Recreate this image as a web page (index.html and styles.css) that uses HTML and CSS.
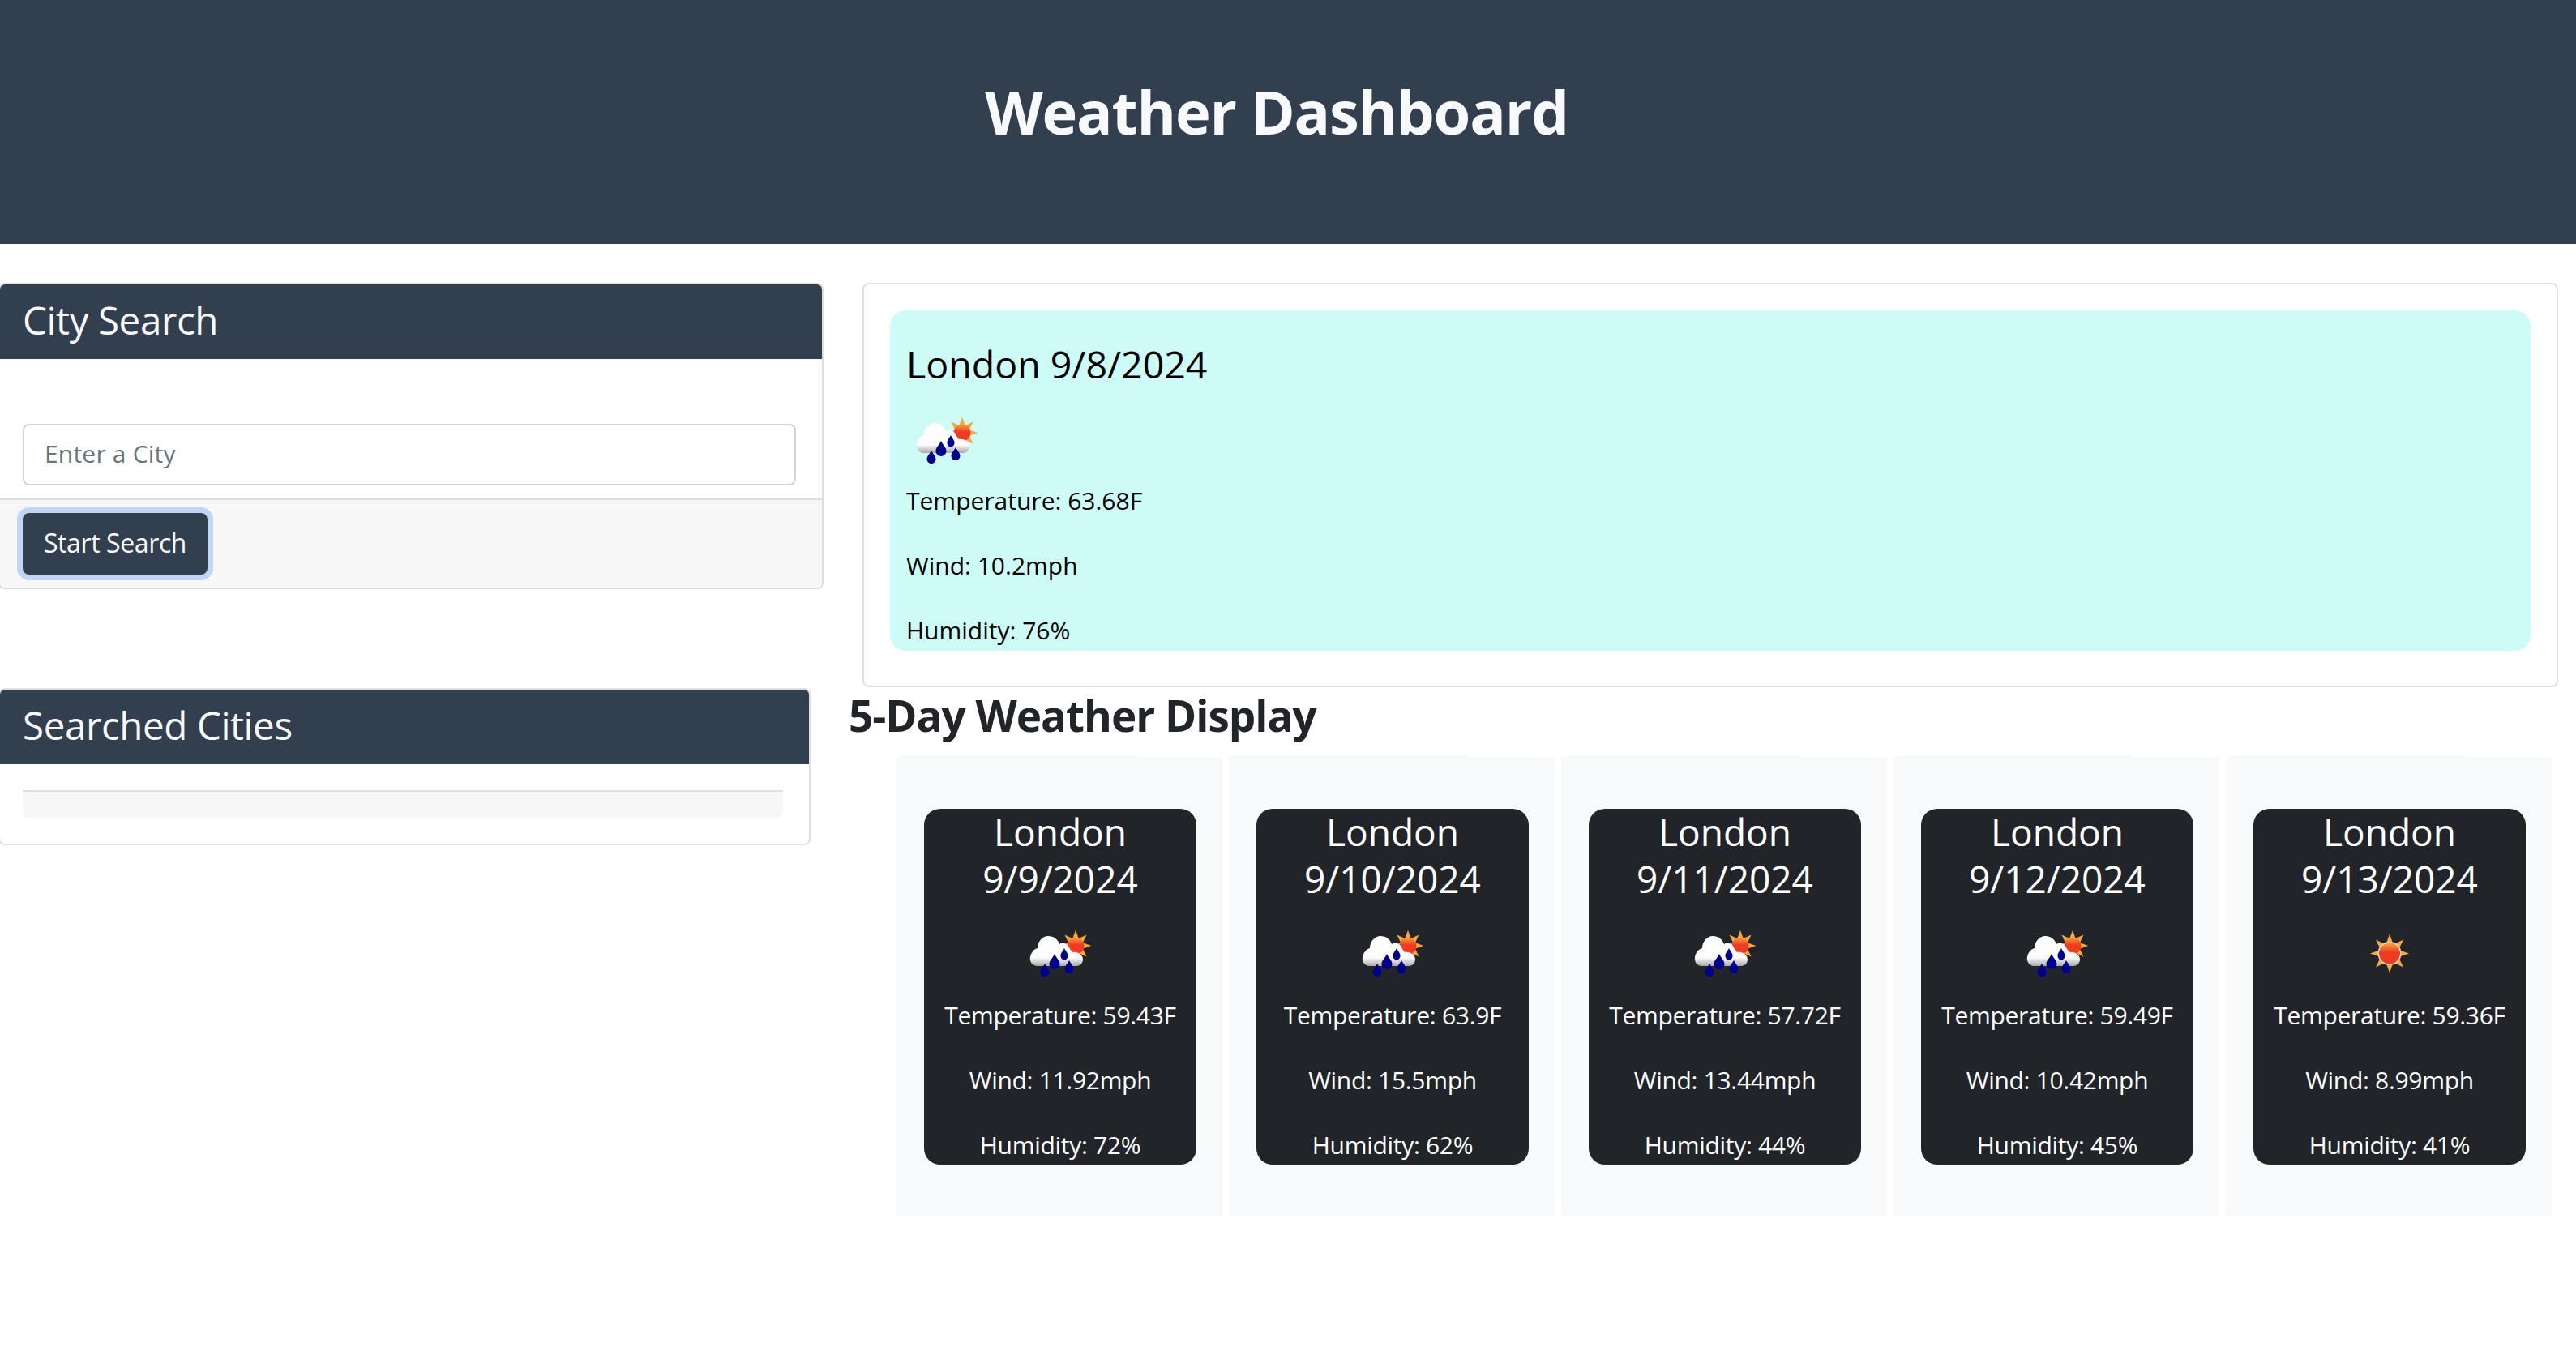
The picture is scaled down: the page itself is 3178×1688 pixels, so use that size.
FILE: index.html
```html
<!DOCTYPE html>
<html lang="en">
<head>
<meta charset="utf-8">
<title>Weather Dashboard</title>
<link rel="stylesheet" href="styles.css">
</head>
<body>
<svg class="sprite" width="0" height="0" aria-hidden="true">
  <defs>
    <linearGradient id="cloudFill" x1="0" y1="0" x2="0" y2="1">
      <stop offset="0" stop-color="#ffffff"/><stop offset="0.72" stop-color="#fbfbfb"/><stop offset="1" stop-color="#a9a9a9"/>
    </linearGradient>
    <linearGradient id="sunFill" x1="0" y1="0" x2="0" y2="1">
      <stop offset="0" stop-color="#f9a63a"/><stop offset="0.45" stop-color="#ee3a24"/><stop offset="1" stop-color="#ee3a24"/>
    </linearGradient>
    <filter id="soft" x="-10%" y="-10%" width="120%" height="120%"><feGaussianBlur stdDeviation="0.7"/></filter>
    <symbol id="icon-rain" viewBox="0 0 100 100">
      <g filter="url(#soft)">
        <g transform="translate(69 38) scale(.8)">
          <path fill="#f6a73c" d="M0-24 4.6-11.1 17-17 11.1-4.6 24 0 11.1 4.6 17 17 4.6 11.1 0 24-4.6 11.1-17 17-11.1 4.6-24 0-11.1-4.6-17-17-4.6-11.1Z"/>
        </g>
        <circle cx="69" cy="38" r="10.5" fill="url(#sunFill)"/>
        <path fill="url(#cloudFill)" d="M22 63C15 63 12 57 13 52 14 46 18 42 22 41 22 33 28 26 35 26 42 26 47 30 49 36 53 33 60 35 62 42 64 44 64 45 65 46 72 45 78 49 78 55 78 60 74 63 70 63Z"/>
        <path fill="#00008f" d="M31 60C29 64 25.500 67 25.500 70.500 25.500 73.500 28 76 31 76 34 76 36.500 73.500 36.500 70.500 36.500 67 33 64 31 60Z"/>
        <path fill="#00008f" d="M43 48C41 53 36.500 56 36.500 60.500 36.500 64 39.500 67 43 67 46.500 67 49.500 64 49.500 60.500 49.500 56 45 53 43 48Z"/>
        <path fill="#00008f" d="M55 41C53 45 50.500 47 50.500 50.500 50.500 53 52.500 55.500 55 55.500 57.500 55.500 59.500 53 59.500 50.500 59.500 47 57 45 55 41Z"/>
        <path fill="#00008f" d="M61 56C59 60 55.500 63 55.500 66.500 55.500 69.500 58 72 61 72 64 72 66.500 69.500 66.500 66.500 66.500 63 63 60 61 56Z"/>
      </g>
    </symbol>
    <symbol id="icon-sun" viewBox="0 0 100 100">
      <g filter="url(#soft)">
        <g transform="translate(50 47.500)">
          <path fill="#f6a73c" d="M0-24 4.6-11.1 17-17 11.1-4.6 24 0 11.1 4.6 17 17 4.6 11.1 0 24-4.6 11.1-17 17-11.1 4.6-24 0-11.1-4.6-17-17-4.6-11.1Z"/>
        </g>
        <circle cx="50" cy="47.500" r="14.500" fill="#f3dcc8"/>
        <circle cx="50" cy="47.500" r="13" fill="url(#sunFill)"/>
      </g>
    </symbol>
  </defs>
</svg>

<header class="site-header">
  <h1 class="site-title">Weather Dashboard</h1>
</header>

<div class="layout">
  <aside class="sidebar">
    <section class="panel panel-search">
      <h2 class="panel-heading">City Search</h2>
      <div class="panel-body">
        <input class="city-input" type="text" placeholder="Enter a City">
      </div>
      <div class="panel-footer">
        <button class="search-button" type="button">Start Search</button>
      </div>
    </section>

    <section class="panel panel-history">
      <h2 class="panel-heading">Searched Cities</h2>
      <div class="history-body">
        <div class="history-list"></div>
      </div>
    </section>
  </aside>

  <main class="content">
    <section class="current-panel">
      <div class="current-card">
        <h3 class="current-title">London 9/8/2024</h3>
        <svg class="wx-icon current-icon" viewBox="0 0 100 100"><use href="#icon-rain"/></svg>
        <p class="stat">Temperature: 63.68F</p>
        <p class="stat">Wind: 10.2mph</p>
        <p class="stat stat-last">Humidity: 76%</p>
      </div>
    </section>

    <h2 class="forecast-title">5-Day Weather Display</h2>

    <div class="forecast-row">
      <div class="forecast-col">
        <article class="day-card">
          <h3 class="day-title">London<br>9/9/2024</h3>
          <svg class="wx-icon day-icon" viewBox="0 0 100 100"><use href="#icon-rain"/></svg>
          <p class="stat day-stat">Temperature: 59.43F</p>
          <p class="stat day-stat">Wind: 11.92mph</p>
          <p class="stat day-stat stat-last">Humidity: 72%</p>
        </article>
      </div>
      <div class="forecast-col">
        <article class="day-card">
          <h3 class="day-title">London<br>9/10/2024</h3>
          <svg class="wx-icon day-icon" viewBox="0 0 100 100"><use href="#icon-rain"/></svg>
          <p class="stat day-stat">Temperature: 63.9F</p>
          <p class="stat day-stat">Wind: 15.5mph</p>
          <p class="stat day-stat stat-last">Humidity: 62%</p>
        </article>
      </div>
      <div class="forecast-col">
        <article class="day-card">
          <h3 class="day-title">London<br>9/11/2024</h3>
          <svg class="wx-icon day-icon" viewBox="0 0 100 100"><use href="#icon-rain"/></svg>
          <p class="stat day-stat">Temperature: 57.72F</p>
          <p class="stat day-stat">Wind: 13.44mph</p>
          <p class="stat day-stat stat-last">Humidity: 44%</p>
        </article>
      </div>
      <div class="forecast-col">
        <article class="day-card">
          <h3 class="day-title">London<br>9/12/2024</h3>
          <svg class="wx-icon day-icon" viewBox="0 0 100 100"><use href="#icon-rain"/></svg>
          <p class="stat day-stat">Temperature: 59.49F</p>
          <p class="stat day-stat">Wind: 10.42mph</p>
          <p class="stat day-stat stat-last">Humidity: 45%</p>
        </article>
      </div>
      <div class="forecast-col">
        <article class="day-card">
          <h3 class="day-title">London<br>9/13/2024</h3>
          <svg class="wx-icon day-icon" viewBox="0 0 100 100"><use href="#icon-sun"/></svg>
          <p class="stat day-stat">Temperature: 59.36F</p>
          <p class="stat day-stat">Wind: 8.99mph</p>
          <p class="stat day-stat stat-last">Humidity: 41%</p>
        </article>
      </div>
    </div>
  </main>
</div>
</body>
</html>
```

FILE: styles.css
```css
* { box-sizing: border-box; }

html, body { margin: 0; padding: 0; background: #fff; }

body {
  font-family: "Open Sans", "Noto Sans", sans-serif;
  font-size: 30px;
  line-height: 48px;
  color: #212529;
}

.sprite { display: block; width: 0; height: 0; }

.site-header {
  height: 301px;
  background: #323f4f;
  padding: 94px 28px 0 0;
  text-align: center;
}

.site-title {
  margin: 0;
  font-size: 74px;
  line-height: 88px;
  font-weight: 700;
  letter-spacing: -1.2px;
  color: #f8f9fa;
}

.layout { display: flex; align-items: flex-start; }

.sidebar {
  flex: 0 0 1015px;
  padding-top: 48px;
  margin-left: -2px;
}

.panel {
  background: #fff;
  border: 2px solid #dfdfdf;
  border-radius: 8px;
  overflow: hidden;
}

.panel-search { width: 1018px; }

.panel-history { width: 1002px; margin-top: 122px; }

.panel-heading {
  margin: 0;
  height: 92px;
  padding: 15px 28px;
  background: #323f4f;
  color: #f8f9fa;
  font-size: 47.5px;
  line-height: 58px;
  font-weight: 400;
  letter-spacing: -.4px;
}

.panel-body { padding: 80px 32px 16px 28px; }

.city-input {
  display: block;
  width: 954px;
  height: 76px;
  padding: 0 25px 3px;
  border: 2px solid #ced4da;
  border-radius: 8px;
  background: #fff;
  font: inherit;
  font-size: 30px;
  font-weight: 500;
  letter-spacing: .2px;
  color: #495057;
}

.city-input::placeholder { color: #6c757d; opacity: 1; }

.panel-footer {
  padding: 16px 28px;
  background: #f7f7f7;
  border-top: 2px solid #dfdfdf;
}

.search-button {
  display: block;
  height: 76px;
  width: 228px;
  padding: 0 0 3px;
  border: 0;
  border-radius: 8px;
  background: #323f4f;
  box-shadow: 0 0 0 7px #c1d5f5;
  color: #f8f9fa;
  font: inherit;
  font-size: 32px;
  font-weight: 500;
  letter-spacing: -.4px;
}

.history-body { padding: 32px 32px 32px 28px; }

.history-list {
  height: 34px;
  width: 938px;
  background: #f7f7f7;
  border-top: 2px solid #dfdfdf;
  border-radius: 0 0 8px 8px;
}

.content {
  flex: 1;
  min-width: 0;
  padding: 48px 22px 0 31px;
}

.current-panel {
  margin-left: 17px;
  height: 499px;
  padding: 32px 32px 0;
  border: 2px solid #dfdfdf;
  border-radius: 8px;
}

.current-card {
  height: 420px;
  padding: 37px 20px 0;
  background: #ccfcf5;
  border-radius: 20px;
  color: #000;
}

.current-title {
  margin: 0 0 18px;
  font-size: 46.500px;
  line-height: 58px;
  font-weight: 400;
}

.wx-icon { display: block; width: 100px; height: 100px; }

.current-icon { margin-bottom: -2px; }

.stat {
  margin: 0 0 32px;
  font-weight: 500;
  letter-spacing: 0;
}

.stat-last { margin-bottom: 0; }

.day-stat { letter-spacing: -.3px; }

.forecast-title {
  margin: 0;
  height: 66px;
  padding-top: 3px;
  font-size: 53px;
  line-height: 64px;
  font-weight: 700;
  letter-spacing: -1px;
  color: #212529;
}

.forecast-row {
  display: flex;
  gap: 8px;
  margin: 20px 0 0 59px;
}

.forecast-col {
  position: relative;
  flex: 0 0 402px;
  height: 567px;
  padding: 64px 32px;
  background: #f8f9fa;
}

.forecast-col::before {
  content: "";
  position: absolute;
  top: -2px;
  bottom: -2px;
  left: 0;
  width: 301px;
  background: #f8f9fa;
  border-radius: 10px;
}

.day-card {
  position: relative;
  width: 336px;
  height: 439px;
  margin-left: 2px;
  background: #212529;
  border-radius: 20px;
  color: #fff;
  text-align: center;
}

.day-title {
  margin: 0 0 16px;
  font-size: 46px;
  line-height: 57.6px;
  font-weight: 400;
}

.day-icon { margin: 0 auto; }
```
